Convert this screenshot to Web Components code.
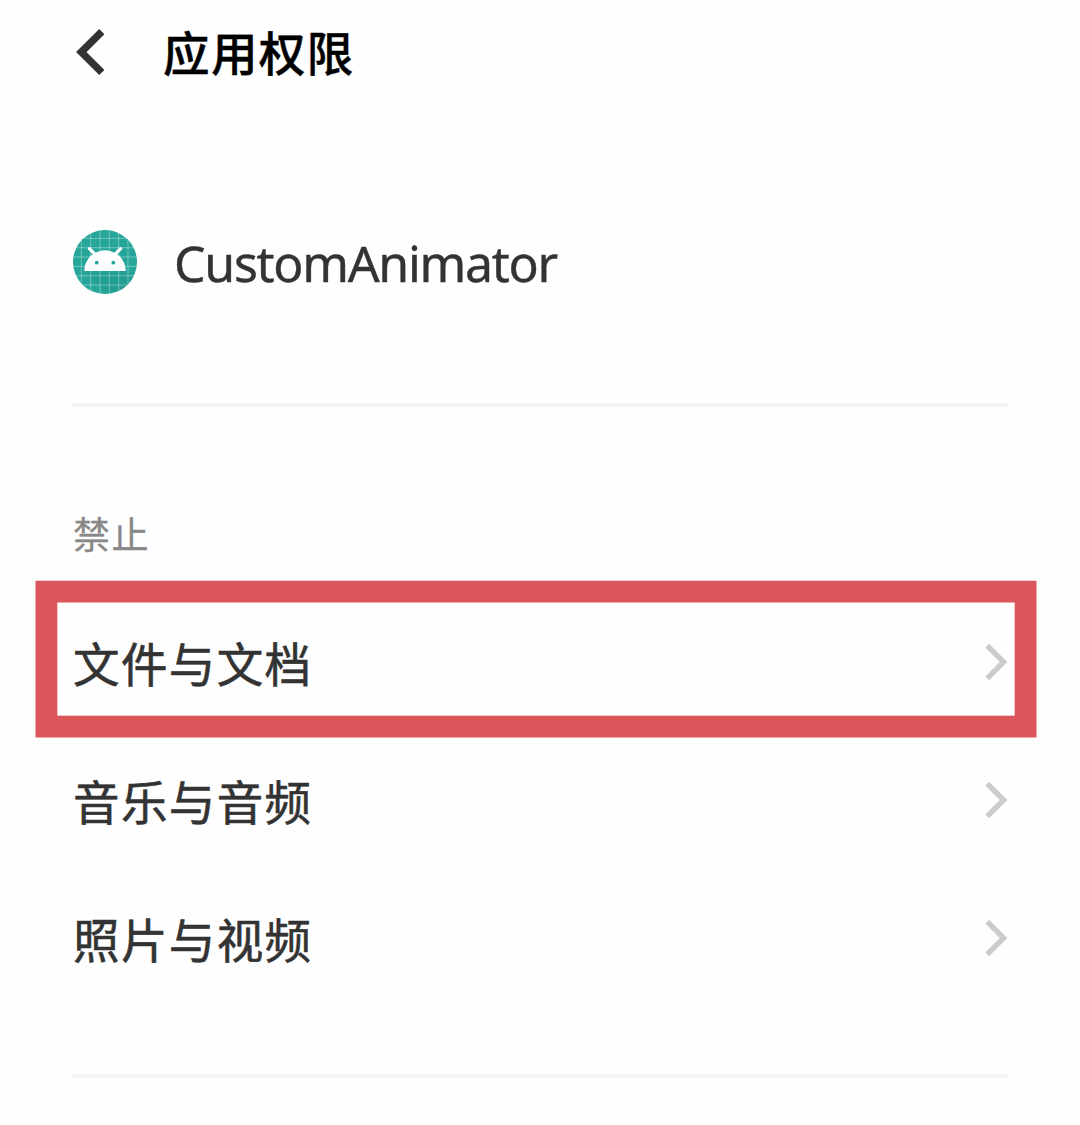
<!DOCTYPE html>
<html lang="zh-CN">
<head>
<meta charset="utf-8">
<title>应用权限</title>
<style>
body { margin: 0; background: #fefefe; font-family: "Noto Sans CJK SC", sans-serif; color: #333; }
</style>
</head>
<body>
<permission-page>
  <page-header>应用权限</page-header>
  <app-identity>CustomAnimator</app-identity>
  <section-divider></section-divider>
  <permission-group label="禁止">
    <permission-row highlighted>文件与文档</permission-row>
    <permission-row>音乐与音频</permission-row>
    <permission-row>照片与视频</permission-row>
  </permission-group>
  <section-divider></section-divider>
</permission-page>
<script>
const define = (name, markup) => customElements.define(name, class extends HTMLElement {
  constructor() {
    super();
    this.attachShadow({ mode: 'open' }).innerHTML = markup;
  }
  connectedCallback() {
    const label = this.shadowRoot.querySelector('.label');
    if (label) label.textContent = this.getAttribute('label');
  }
});

define('permission-page', `
<style>
:host { display: flex; flex-direction: column; box-sizing: border-box; height: 1125px; padding: 0 72px; overflow: hidden; }
</style><slot></slot>`);

define('page-header', `
<style>
:host { display: flex; align-items: center; height: 104px; gap: 55px; color: #000; font-size: 46.5px; letter-spacing: 1.4px; line-height: 72px; }
svg { display: block; width: 36px; height: 50px; }
h1 { margin: 0 0 3px; font: inherit; font-weight: 500; -webkit-text-stroke: .4px #000; }
</style>
<svg viewBox="0 0 36 50" fill="none" stroke="#333" stroke-width="7.4" stroke-linejoin="miter"><path d="M29.8 4.7 L9.3 25 L29.8 45.5"/></svg>
<h1><slot></slot></h1>`);

define('app-identity', `
<style>
:host { display: flex; align-items: center; height: 299px; gap: 36px; font: 400 50px/64px "Noto Sans", sans-serif; letter-spacing: -1.3px; -webkit-text-stroke: .4px #333; }
svg { display: block; width: 66px; height: 66px; margin-top: 17px; }
span { margin-top: 18px; }
</style>
<svg viewBox="0 0 66 66">
  <defs><clipPath id="disc"><circle cx="33" cy="33" r="32"/></clipPath></defs>
  <g clip-path="url(#disc)">
    <rect width="66" height="66" fill="#26a69a"/>
    <path d="M12.5 42 L42 71 H70 V57 L53.5 42Z" fill="#1f9589" opacity=".5"/>
    <path d="M9.3 0V66M18.7 0V66M28 0V66M37.3 0V66M46.7 0V66M56 0V66M0 9.3H66M0 18.7H66M0 28H66M0 37.3H66M0 46.7H66M0 56H66" stroke="#fff" stroke-opacity=".38" stroke-width=".9"/>
    <path d="M12.3 42 A20.7 20.7 0 0 1 53.7 42Z" fill="#fff"/>
    <path d="M25 27.4L17.4 19.6M41 27.4L48.6 19.6" stroke="#fff" stroke-width="3.2" stroke-linecap="round"/>
    <circle cx="24.7" cy="33.7" r="1.9" fill="#26a69a"/><circle cx="41.3" cy="33.7" r="1.9" fill="#26a69a"/>
  </g>
</svg><span><slot></slot></span>`);

define('section-divider', `
<style>:host { display: block; flex: none; height: 4px; background: #f4f4f4; }</style>`);

define('permission-group', `
<style>
:host { display: flex; flex-direction: column; height: 667px; box-sizing: border-box; padding-top: 98px; }
.label { height: 56px; margin: 0 0 32px 1px; font-size: 37px; letter-spacing: 1.5px; line-height: 56px; color: #888; -webkit-text-stroke: .3px #888; }
</style>
<div class="label"></div><slot></slot>`);

define('permission-row', `
<style>
:host { position: relative; display: flex; align-items: center; justify-content: space-between; height: 138px; font-size: 46.5px; letter-spacing: 1.4px; line-height: 72px; -webkit-text-stroke: .6px #333; }
span { margin: 0 0 1px 1px; }
.arrow { display: block; width: 24px; height: 40px; }
.frame { display: none; position: absolute; left: -37px; top: -13px; width: 1002px; height: 160px; pointer-events: none; }
:host([highlighted]) .frame { display: block; }
</style>
<span><slot></slot></span>
<svg class="arrow" viewBox="0 0 24 40" fill="none" stroke="#ccc" stroke-width="5.4"><path d="M3.2 3.7L19.6 20L3.2 36.3"/></svg>
<svg class="frame" viewBox="0 0 1002 160" fill="none"><rect x="11.4" y="11.6" width="979.2" height="135" stroke="#db565b" stroke-width="21.8"/></svg>`);
</script>
</body>
</html>
